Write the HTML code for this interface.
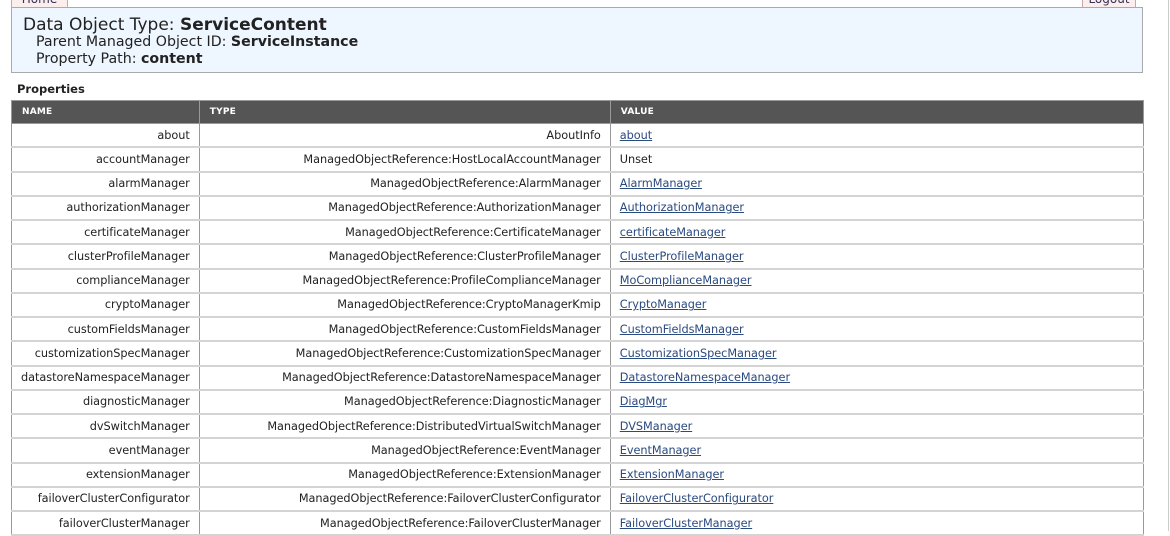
<!DOCTYPE html>
<html><head><style>
body{margin:0;width:1170px;height:531px;overflow:hidden;background:#fff;font-family:"DejaVu Sans","Liberation Sans",sans-serif;position:relative;color:#222}
.tab{position:absolute;top:-8px;height:14px;background:#fdeeee;border:1px solid #c8a8a8;border-top:none;font-size:12px;line-height:12px;color:#335;text-align:center;padding-top:1px}
.box{position:absolute;left:11px;top:7px;width:1130px;height:64px;background:#eef6ff;border:1px solid #aaa}
.t1{position:absolute;left:11px;top:7px;font-size:17px;white-space:nowrap}
.t2{position:absolute;left:24px;font-size:14.2px;white-space:nowrap}
.prop{position:absolute;left:17px;top:82px;font-size:11.5px;font-weight:bold}
table{position:absolute;left:11px;top:100px;width:1133px;border-collapse:collapse;font-size:11.3px;letter-spacing:-0.05px}
th{background:#555;color:#fff;font-size:9px;text-align:left;height:22px;padding:0 0 0 10px;border:1px solid #999;letter-spacing:0.2px}
td{height:22.25px;border-left:1px solid #999;border-right:1px solid #999;border-bottom:2px solid #d4d4d4;padding:0 9px;white-space:nowrap}
td.r{text-align:right}
a{color:#2a4a80;text-decoration:underline}
</style></head><body>
<div class="tab" style="left:11px;width:55px">Home</div>
<div class="tab" style="left:1082px;width:52px">Logout</div>
<div class="box">
<div class="t1">Data Object Type: <b>ServiceContent</b></div>
<div class="t2" style="top:26px">Parent Managed Object ID: <b>ServiceInstance</b></div>
<div class="t2" style="top:43px">Property Path: <b>content</b></div>
</div>
<div class="prop">Properties</div>
<div style="position:absolute;left:1168px;top:0;width:1px;height:531px;background:#ccc"></div>
<table>
<colgroup><col style="width:186px"><col style="width:411px"><col></colgroup>
<tr><th>NAME</th><th>TYPE</th><th>VALUE</th></tr>
<tr><td class="r">about</td><td class="r">AboutInfo</td><td><a>about</a></td></tr>
<tr><td class="r">accountManager</td><td class="r">ManagedObjectReference:HostLocalAccountManager</td><td>Unset</td></tr>
<tr><td class="r">alarmManager</td><td class="r">ManagedObjectReference:AlarmManager</td><td><a>AlarmManager</a></td></tr>
<tr><td class="r">authorizationManager</td><td class="r">ManagedObjectReference:AuthorizationManager</td><td><a>AuthorizationManager</a></td></tr>
<tr><td class="r">certificateManager</td><td class="r">ManagedObjectReference:CertificateManager</td><td><a>certificateManager</a></td></tr>
<tr><td class="r">clusterProfileManager</td><td class="r">ManagedObjectReference:ClusterProfileManager</td><td><a>ClusterProfileManager</a></td></tr>
<tr><td class="r">complianceManager</td><td class="r">ManagedObjectReference:ProfileComplianceManager</td><td><a>MoComplianceManager</a></td></tr>
<tr><td class="r">cryptoManager</td><td class="r">ManagedObjectReference:CryptoManagerKmip</td><td><a>CryptoManager</a></td></tr>
<tr><td class="r">customFieldsManager</td><td class="r">ManagedObjectReference:CustomFieldsManager</td><td><a>CustomFieldsManager</a></td></tr>
<tr><td class="r">customizationSpecManager</td><td class="r">ManagedObjectReference:CustomizationSpecManager</td><td><a>CustomizationSpecManager</a></td></tr>
<tr><td class="r">datastoreNamespaceManager</td><td class="r">ManagedObjectReference:DatastoreNamespaceManager</td><td><a>DatastoreNamespaceManager</a></td></tr>
<tr><td class="r">diagnosticManager</td><td class="r">ManagedObjectReference:DiagnosticManager</td><td><a>DiagMgr</a></td></tr>
<tr><td class="r">dvSwitchManager</td><td class="r">ManagedObjectReference:DistributedVirtualSwitchManager</td><td><a>DVSManager</a></td></tr>
<tr><td class="r">eventManager</td><td class="r">ManagedObjectReference:EventManager</td><td><a>EventManager</a></td></tr>
<tr><td class="r">extensionManager</td><td class="r">ManagedObjectReference:ExtensionManager</td><td><a>ExtensionManager</a></td></tr>
<tr><td class="r">failoverClusterConfigurator</td><td class="r">ManagedObjectReference:FailoverClusterConfigurator</td><td><a>FailoverClusterConfigurator</a></td></tr>
<tr><td class="r">failoverClusterManager</td><td class="r">ManagedObjectReference:FailoverClusterManager</td><td><a>FailoverClusterManager</a></td></tr>
</table>
</body></html>
